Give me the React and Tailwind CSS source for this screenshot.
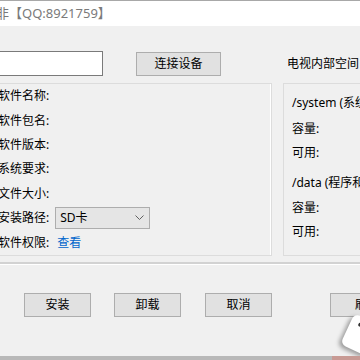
import React from 'react';

const font = { fontFamily: '"Noto Sans", "Noto Sans CJK SC", sans-serif' };

const WinButton = ({ children, className = '' }) => (
    <button
        className={`h-[24px] border border-[#adadad] bg-[#e1e1e1] text-[12px] text-black leading-none flex items-center justify-center shrink-0 ${className}`}
    >
        {children}
    </button>
);

const Row = ({ children, className = '' }) => (
    <div className={`flex items-center text-[12px] text-black whitespace-nowrap ${className}`}>{children}</div>
);

const App = () => {
    const leftRows = ['软件名称:', '软件包名:', '软件版本:', '系统要求:', '文件大小:'];

    return (
        <div className="w-[360px] h-[360px] overflow-hidden bg-[#f0f0f0] relative" style={font}>
            {/* title strip */}
            <div className="h-[26px] bg-white border-t border-[#a8a8a8] flex items-center">
                <span className="ml-[-4px] text-[13px] text-[#7a7a7a] whitespace-nowrap">非【QQ:8921759】</span>
            </div>

            {/* device row */}
            <div className="flex items-center mt-[25px] h-[25px]">
                <div className="ml-[-10px] w-[113px] h-[25px] bg-white border border-[#7a7a7a] shrink-0" />
                <WinButton className="ml-[33px] w-[85px]">连接设备</WinButton>
                <span className="ml-[66px] text-[12px] text-black whitespace-nowrap">电视内部空间</span>
            </div>

            {/* panels */}
            <div className="flex mt-[7px] h-[173px]">
                <div className="ml-[-10px] w-[282px] shrink-0 border border-[#dcdcdc] shadow-[inset_-1px_0_0_#ffffff] flex flex-col">
                    {leftRows.map((t) => (
                        <Row key={t} className="h-[25px] pl-[7px]">{t}</Row>
                    ))}
                    <Row className="h-[25px] pl-[7px]">
                        <span>安装路径:</span>
                        <div className="ml-[6px] w-[95px] h-[22px] border border-[#adadad] bg-[#e5e5e5] flex items-center justify-between pl-[4px] pr-[5px]">
                            <span>SD卡</span>
                            <svg width="9" height="6" viewBox="0 0 9 6" fill="none" stroke="#606060" strokeWidth="1">
                                <path d="M0.5 0.5 L4.5 4.5 L8.5 0.5" />
                            </svg>
                        </div>
                    </Row>
                    <Row className="h-[25px] pl-[7px]">
                        <span>软件权限:</span>
                        <span className="ml-[8px] text-[#0066cc]">查看</span>
                    </Row>
                </div>
                <div className="ml-[11px] w-[100px] shrink-0 border border-[#dcdcdc] flex flex-col pl-[8px] pt-[9px]">
                    <Row className="h-[20px]">/system (系统程序</Row>
                    <Row className="h-[25px] mt-[3px]">容量:</Row>
                    <Row className="h-[24px]">可用:</Row>
                    <Row className="h-[25px] mt-[5px]">/data (程序和数据</Row>
                    <Row className="h-[25px]">容量:</Row>
                    <Row className="h-[24px]">可用:</Row>
                </div>
            </div>

            {/* separator */}
            <div className="mt-[6px] border-t-2 border-[#d2d2d2] border-b border-b-white" />

            {/* bottom buttons */}
            <div className="flex mt-[28px]">
                <WinButton className="ml-[24px] w-[67px] h-[23px]">安装</WinButton>
                <WinButton className="ml-[23px] w-[67px] h-[23px]">卸载</WinButton>
                <WinButton className="ml-[24px] w-[67px] h-[23px]">取消</WinButton>
                <WinButton className="ml-[58px] w-[67px] h-[23px] justify-start pl-[24px]">刷新</WinButton>
            </div>

            {/* floating widget fragment */}
            <div className="absolute left-[346px] top-[318px] w-[30px] h-[34px] bg-white rounded-[6px] rotate-[25deg] shadow-[-2px_3px_4px_rgba(0,0,0,0.35)]">
                <div className="absolute left-[8px] top-[6px] w-[5px] h-[4px] bg-[#333] rounded-full" />
            </div>

            {/* bottom strip */}
            <div className="absolute left-0 bottom-0 w-full h-[4px] bg-[#b8b8b8] flex">
                <div className="ml-auto w-[28px] h-full bg-[#c89a94]" />
            </div>
        </div>
    );
};

export default App;
